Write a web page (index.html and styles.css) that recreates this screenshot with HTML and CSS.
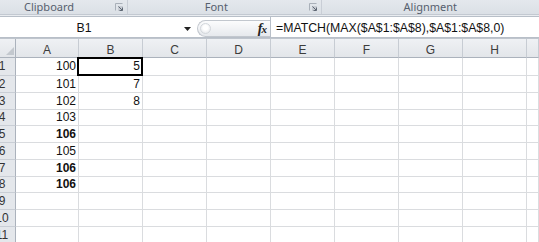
FILE: index.html
```html
<!DOCTYPE html>
<html lang="en">
  <head>
    <meta charset="UTF-8" />
    <meta name="viewport" content="width=device-width, initial-scale=1.0" />
    <title>Book1 - Excel</title>
    <link rel="stylesheet" href="styles.css">
  </head>
  <body>
    <div class="ribbon">
      <div class="group clip">
        <span class="label">Clipboard</span>
        <span class="launch">
          <svg width="8" height="8" viewBox="0 0 8 8"><path d="M0.5 7.5V0.5H7.5" fill="none" stroke="#a9b0b9"/><rect x="3" y="3" width="5" height="5" fill="#c7ccd3"/><path d="M3.5 3.5L7 7M4.5 7.5H7.5V4.5" fill="none" stroke="#5f6874"/></svg>
        </span>
      </div>
      <div class="group font">
        <span class="label">Font</span>
        <span class="launch">
          <svg width="8" height="8" viewBox="0 0 8 8"><path d="M0.5 7.5V0.5H7.5" fill="none" stroke="#a9b0b9"/><rect x="3" y="3" width="5" height="5" fill="#c7ccd3"/><path d="M3.5 3.5L7 7M4.5 7.5H7.5V4.5" fill="none" stroke="#5f6874"/></svg>
        </span>
      </div>
      <div class="group align">
        <span class="label">Alignment</span>
      </div>
    </div>

    <div class="fbar">
      <div class="namebox">
        <span class="ref">B1</span>
        <svg class="drop" width="7" height="4" viewBox="0 0 7 4"><path d="M0 0H7L3.5 4Z" fill="#222"/></svg>
      </div>
      <div class="pill">
        <span class="knob"></span>
        <i class="fx">f<span>x</span></i>
      </div>
      <div class="formula">=MATCH(MAX($A$1:$A$8),$A$1:$A$8,0)</div>
    </div>

    <div class="sheet">
      <div class="row head">
        <div class="corner"><svg width="8" height="8" viewBox="0 0 8 8"><path d="M8 0V8H0Z" fill="#c3c8ce"/></svg></div>
        <div>A</div><div>B</div><div>C</div><div>D</div><div>E</div><div>F</div><div>G</div><div>H</div><div></div>
      </div>
      <div class="row tall">
        <div class="rh">1</div><div>100</div><div class="sel">5</div><div></div><div></div><div></div><div></div><div></div><div></div><div></div>
      </div>
      <div class="row">
        <div class="rh">2</div><div>101</div><div>7</div><div></div><div></div><div></div><div></div><div></div><div></div><div></div>
      </div>
      <div class="row">
        <div class="rh">3</div><div>102</div><div>8</div><div></div><div></div><div></div><div></div><div></div><div></div><div></div>
      </div>
      <div class="row short">
        <div class="rh">4</div><div>103</div><div></div><div></div><div></div><div></div><div></div><div></div><div></div><div></div>
      </div>
      <div class="row">
        <div class="rh">5</div><div class="b">106</div><div></div><div></div><div></div><div></div><div></div><div></div><div></div><div></div>
      </div>
      <div class="row">
        <div class="rh">6</div><div>105</div><div></div><div></div><div></div><div></div><div></div><div></div><div></div><div></div>
      </div>
      <div class="row">
        <div class="rh">7</div><div class="b">106</div><div></div><div></div><div></div><div></div><div></div><div></div><div></div><div></div>
      </div>
      <div class="row short">
        <div class="rh">8</div><div class="b">106</div><div></div><div></div><div></div><div></div><div></div><div></div><div></div><div></div>
      </div>
      <div class="row">
        <div class="rh">9</div><div></div><div></div><div></div><div></div><div></div><div></div><div></div><div></div><div></div>
      </div>
      <div class="row">
        <div class="rh">10</div><div></div><div></div><div></div><div></div><div></div><div></div><div></div><div></div><div></div>
      </div>
      <div class="row">
        <div class="rh">11</div><div></div><div></div><div></div><div></div><div></div><div></div><div></div><div></div><div></div>
      </div>
    </div>
  </body>
</html>
```

FILE: styles.css
```css
* {
  box-sizing: border-box;
}
body {
  margin: 0;
  background: #e9ecf0;
  font-family: "Liberation Sans", Arial, sans-serif;
  overflow: hidden;
}

/* ribbon group captions */
.ribbon {
  display: flex;
  height: 15px;
  background: linear-gradient(#e4e8ed, #dbe0e6);
  border-bottom: 1px solid #c3c9d1;
  font-family: "Noto Sans", sans-serif;
  font-size: 11px;
  color: #56606e;
}
.group {
  display: flex;
  border-right: 1px solid #c9ced6;
}
.group .label {
  flex: 1;
  text-align: center;
  line-height: 13px;
}
.clip {
  width: 153px;
  margin-left: -13px;
}
.font {
  width: 210px;
}
.align {
  width: 236px;
  border-right: none;
}
.launch {
  width: 16px;
  padding: 3px 0 0 4px;
}
.launch svg {
  display: block;
}

/* formula bar */
.fbar {
  display: flex;
  height: 22px;
  margin-top: 1px;
  background: #fff;
  border-top: 1px solid #b8bfc8;
  border-bottom: 1px solid #b8bfc8;
  font-size: 12.3px;
  color: #111;
}
.namebox {
  width: 196px;
  display: flex;
}
.ref {
  flex: 1;
  text-align: center;
  padding: 3px 4px 0 0;
  line-height: 17px;
}
.drop {
  align-self: center;
  margin: 3px 5px 0 12px;
}
.pill {
  width: 73px;
  height: 17px;
  margin: 3px 0 0 1px;
  border: 1px solid #c2c7ce;
  border-right: none;
  border-radius: 9px 0 0 9px;
  background: linear-gradient(#fcfcfd, #e6e9ed);
  display: flex;
  align-items: center;
  justify-content: space-between;
  padding: 0 3px 0 2px;
}
.knob {
  width: 11px;
  height: 11px;
  border-radius: 50%;
  border: 1px solid #d3d7dc;
  background: radial-gradient(circle at 50% 40%, #fff 30%, #e0e3e7 100%);
}
.fx {
  font: italic bold 14px "Liberation Serif", serif;
  color: #222;
  line-height: 14px;
}
.fx span {
  font-size: 11px;
  margin-left: -1px;
}
.formula {
  flex: 1;
  border-left: 1px solid #b8bfc8;
  padding: 3px 0 0 5px;
  line-height: 17px;
  white-space: nowrap;
}

/* grid */
.sheet {
  margin-left: -11px;
  border-top: 1px solid #bfc5cd;
  background: #fff;
  font-size: 12px;
  color: #111;
}
.row {
  display: grid;
  grid-template-columns: 27px 63px repeat(7, 64px) 1fr;
  height: 17px;
  line-height: 16px;
}
.row > div {
  border-right: 1px solid #dadcdf;
  border-bottom: 1px solid #dadcdf;
  text-align: right;
  padding-right: 2px;
  white-space: nowrap;
}
.tall {
  height: 18px;
  line-height: 17px;
}
.short {
  height: 16px;
  line-height: 15px;
}
.head {
  height: 19px;
  background: linear-gradient(#eff1f4, #e2e5e9);
}
.head > div {
  text-align: center;
  padding: 5px 0 0;
  line-height: 13px;
  color: #3c3c3c;
  border-right-color: #c7ccd3;
  border-bottom-color: #abb2bc;
}
.head > .corner {
  display: flex;
  justify-content: flex-end;
  align-items: flex-end;
  padding: 0 1px 2px 0;
  border-right-color: #abb2bc;
}
.row > .rh {
  background: #e4e7eb;
  text-align: center;
  padding-right: 0;
  color: #333;
  border-right-color: #abb2bc;
  border-bottom-color: #c9ced5;
}
.b {
  font-weight: bold;
}
.sel {
  position: relative;
}
.sel::after {
  content: "";
  position: absolute;
  left: -2px;
  top: -1px;
  right: -1px;
  bottom: -1px;
  border: 2px solid #000;
}
```
